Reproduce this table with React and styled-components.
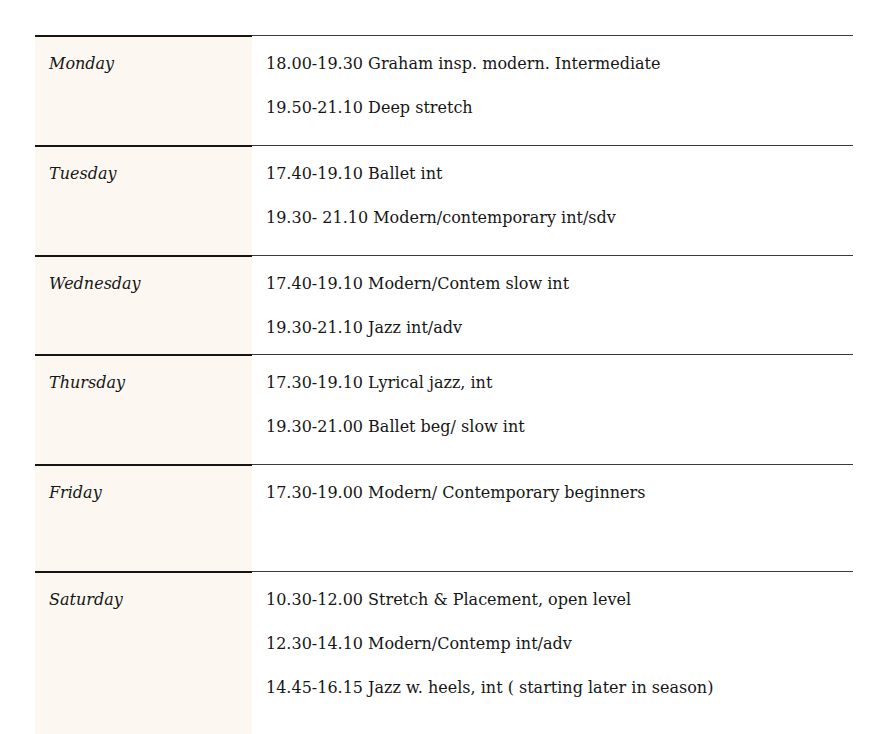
import React from 'react';
import styled, { createGlobalStyle } from 'styled-components';

const GlobalStyle = createGlobalStyle`
    body {
        margin: 0;
        background: #ffffff;
        font-family: "DejaVu Serif", serif;
        color: #161616;
    }
`

const Page = styled.div`
    padding: 35px 0 0 35px;
`

const Table = styled.div`
    width: 818px;
    display: grid;
    grid-template-columns: 217px 1fr;
`

const DayCell = styled.div`
    background: #fcf8f1;
    border-top: 2px solid #151515;
    padding: 14px 14px 0 14px;
    font-style: italic;
    font-size: 16px;
    line-height: 26px;
`

const ClassCell = styled.div`
    border-top: 1.5px solid #3a3a3a;
    padding: 15px 14px ${props => props.$bottom}px 14px;
    display: flex;
    flex-direction: column;
    gap: 18px;
    font-size: 16px;
    line-height: 26px;
`

const Item = styled.div``

const schedule = [
    { day: 'Monday', classes: ['18.00-19.30 Graham insp. modern. Intermediate', '19.50-21.10 Deep stretch'] },
    { day: 'Tuesday', classes: ['17.40-19.10 Ballet int', '19.30- 21.10 Modern/contemporary int/sdv'] },
    { day: 'Wednesday', bottom: 13, classes: ['17.40-19.10 Modern/Contem slow int', '19.30-21.10 Jazz int/adv'] },
    { day: 'Thursday', classes: ['17.30-19.10 Lyrical jazz, int', '19.30-21.00 Ballet beg/ slow int'] },
    { day: 'Friday', bottom: 65, classes: ['17.30-19.00 Modern/ Contemporary beginners'] },
    { day: 'Saturday', bottom: 68, classes: ['10.30-12.00 Stretch & Placement, open level', '12.30-14.10 Modern/Contemp int/adv', '14.45-16.15 Jazz w. heels, int ( starting later in season)'] },
];

function App()
{
    return(
        <Page>
            <GlobalStyle />
            <Table>
                {schedule.map(row => (
                    <React.Fragment key={row.day}>
                        <DayCell>{row.day}</DayCell>
                        <ClassCell $bottom={row.bottom || 24}>
                            {row.classes.map((c, i) => <Item key={i}>{c}</Item>)}
                        </ClassCell>
                    </React.Fragment>
                ))}
            </Table>
        </Page>
    );
}

export default App;
